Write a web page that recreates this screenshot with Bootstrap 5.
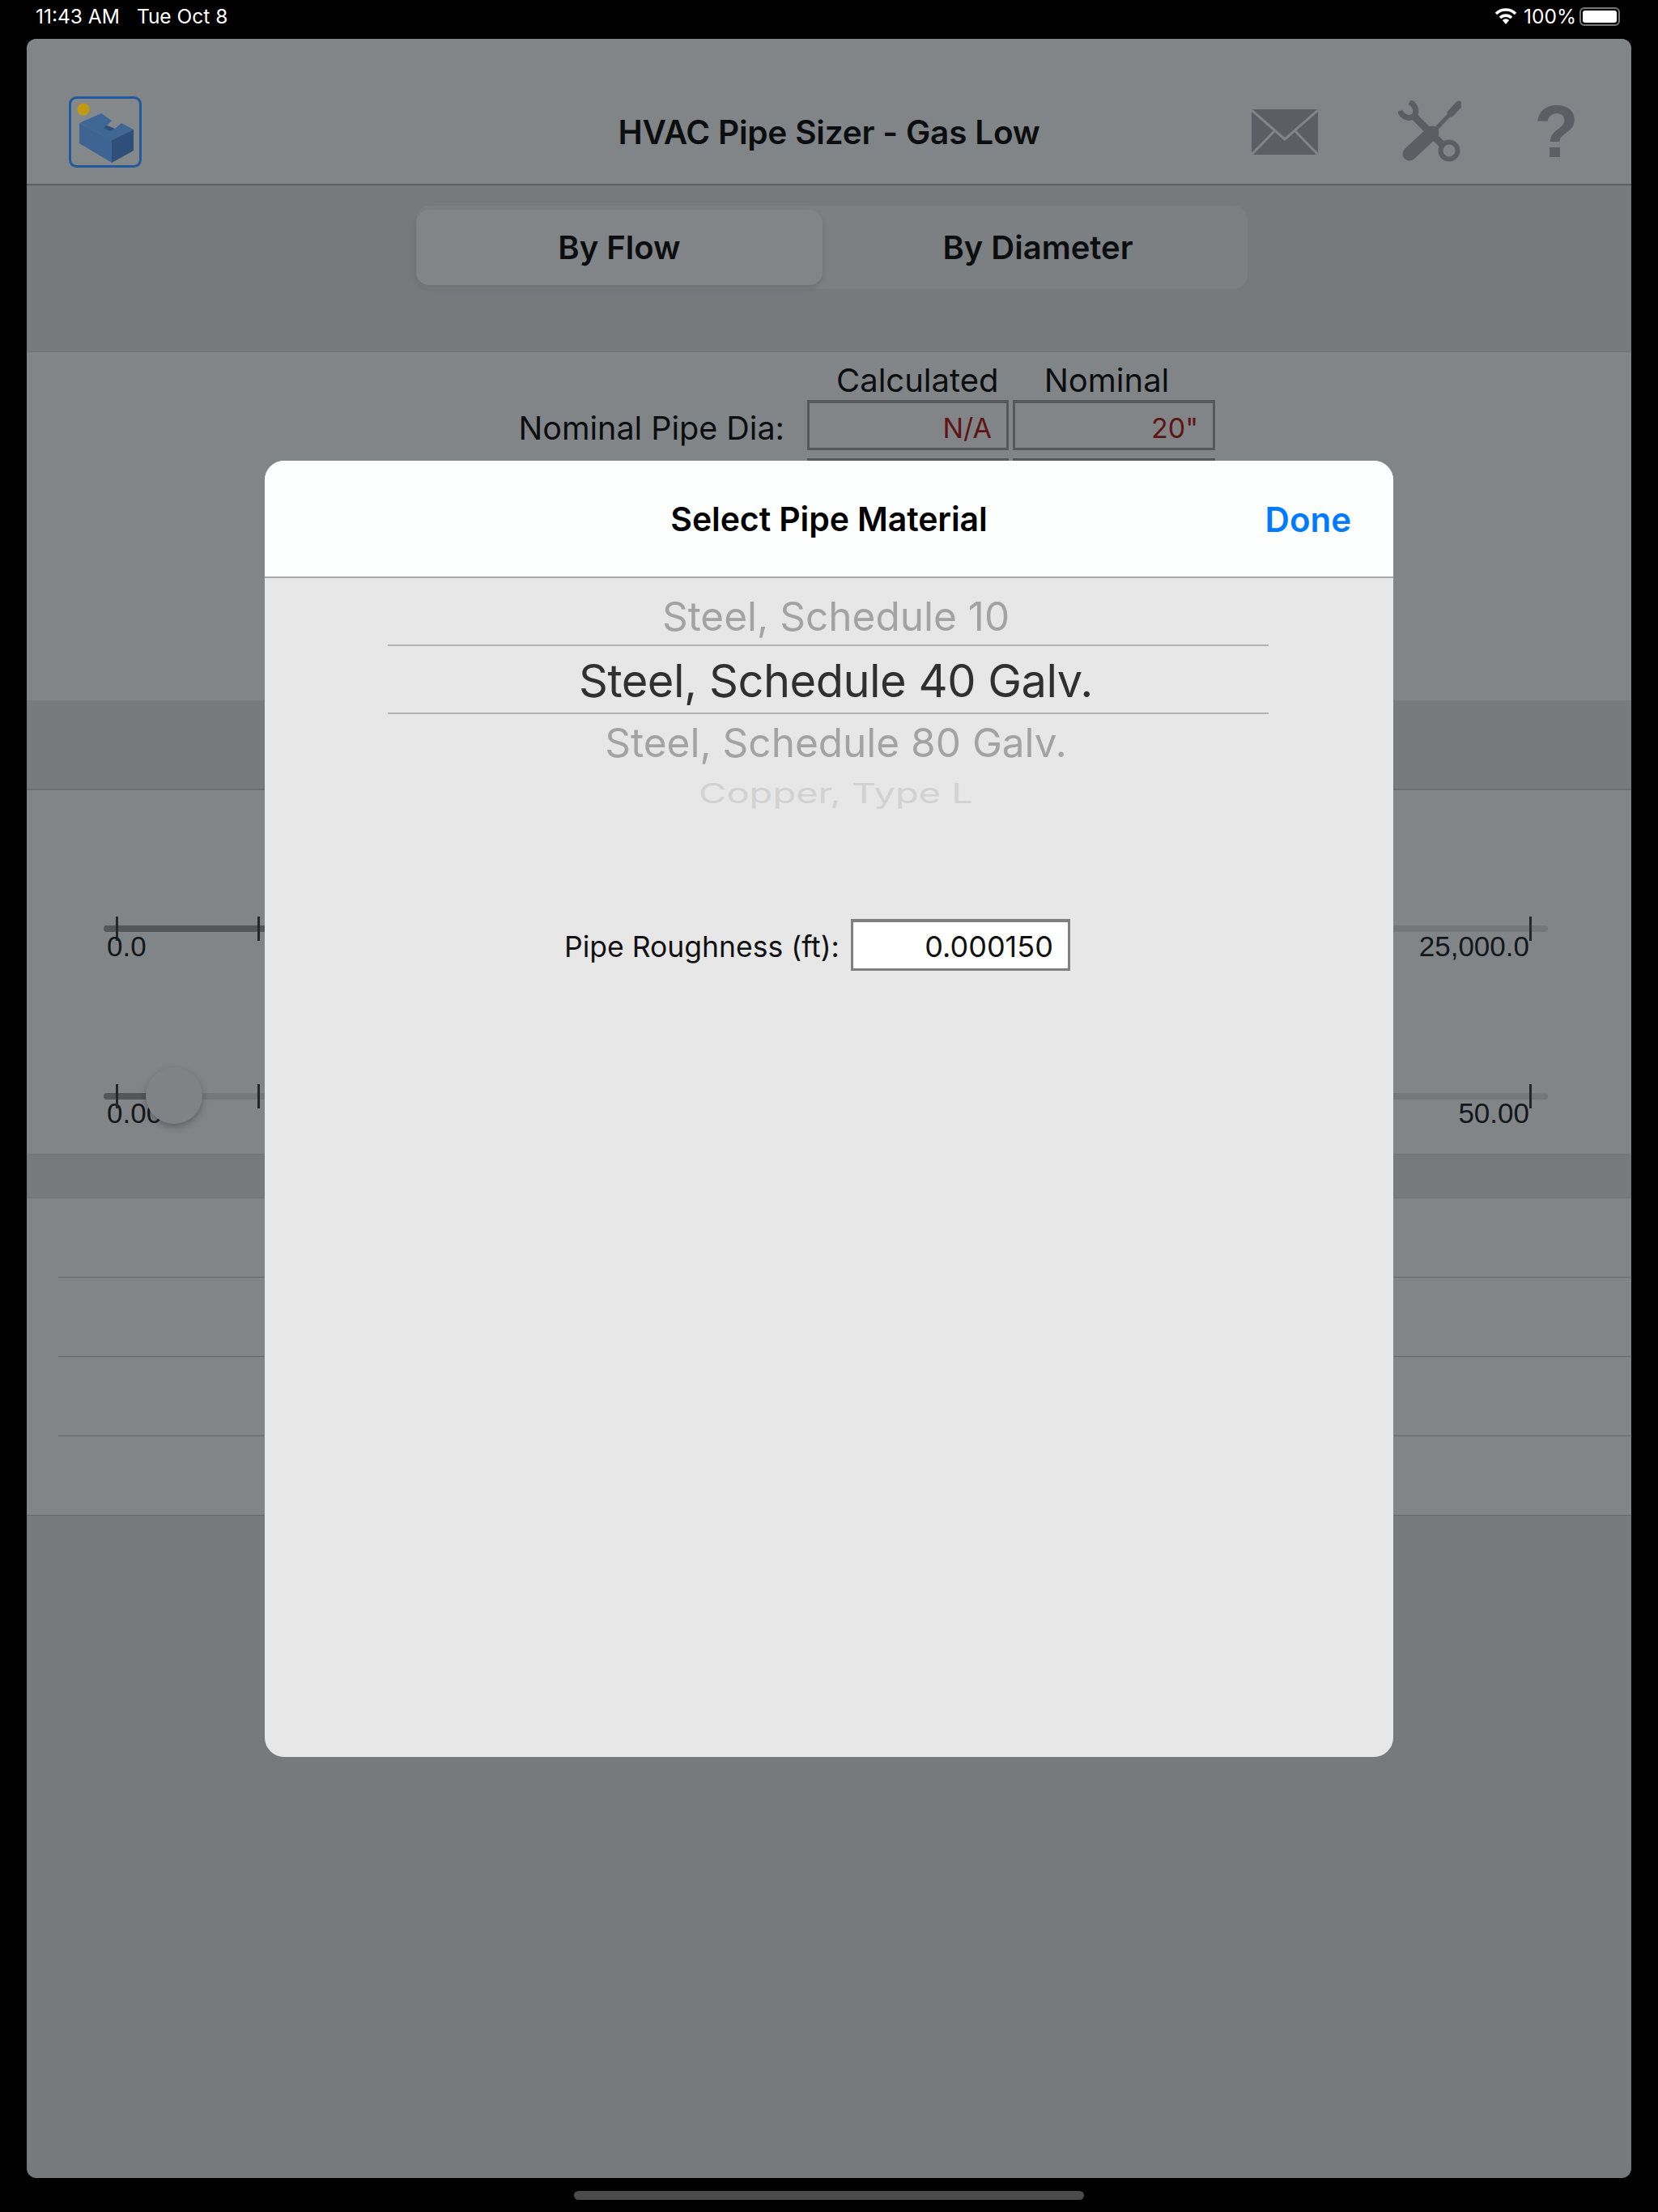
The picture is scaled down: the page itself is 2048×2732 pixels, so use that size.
<!DOCTYPE html>
<html lang="en">
<head>
  <meta charset="UTF-8" />
  <meta name="viewport" content="width=device-width, initial-scale=1.0" />
  <title>HVAC Pipe Sizer - Gas Low</title>
  <link href="https://cdn.jsdelivr.net/npm/bootstrap@5.3.0/dist/css/bootstrap.min.css" rel="stylesheet">
  <style>
    body { background: #000; width: 2048px; height: 2732px; overflow: hidden; font-family: Inter, "Liberation Sans", sans-serif; color: #0b0d0f; }

    /* status bar */
    .status-row { height: 48px; padding: 0 47px 8px 44px; color: #fff; font-size: 24.5px; }
    .status-date { margin-left: 21px; }
    .batt { width: 50px; height: 23px; border: 2px solid #777; border-radius: 6px; padding: 2px; }
    .batt-in { height: 100%; background: #fff; border-radius: 3px; }

    /* app behind the dim */
    .app-panel { margin: 0 33px; height: 2642px; background: #767a7c; border-radius: 12px; overflow: hidden; }
    .app-head { display: grid; grid-template-columns: 1fr auto 1fr; align-items: center; height: 181px; padding-top: 50px; background: #818588; border-bottom: 2px solid #5b5f62; }
    .app-title { font-size: 40.5px; font-weight: 600; letter-spacing: -.2px; padding-top: 4px; }
    .head-icons { padding-right: 65px; }
    .tools-ico { margin: 0 90px 0 99px; }
    .qmark { font-family: "Liberation Sans", sans-serif; font-weight: 700; font-size: 90px; line-height: 80px; color: #5b5f63; }

    .tab-band { height: 206px; padding-top: 25px; border-bottom: 1px solid #6b6f72; }
    .seg-wrap { width: 1027px; height: 103px; margin-left: 481px; background: #7c8082; border-radius: 18px; padding: 5px 0 5px 0; }
    .seg-btn { font-size: 40px; font-weight: 600; color: #0b0d0f; border: 0; border-radius: 16px; padding: 0; height: 93px; background: transparent; }
    .seg-on { width: 502px; background: #818588; box-shadow: 0 4px 8px rgba(0,0,0,.12); }
    .seg-off { width: 516px; }

    .light-block { background: #818588; }
    .dia-block { height: 430px; padding-top: 11px; }
    .col-cap { font-size: 40px; line-height: 48px; text-align: center; }
    .cap-gap { width: 1000px; }
    .cap-calc { width: 198px; }
    .cap-nom { width: 272px; }
    .dia-label { font-size: 39.5px; line-height: 50px; width: 936px; text-align: right; margin-top: 8px; }
    .dia-spacer { width: 936px; }
    .val-box { width: 249px; height: 62px; border: 3px solid #55595c; border-top-width: 4px; line-height: 62px; text-align: right; padding-right: 18px; font-size: 34px; color: #5e1414; }
    .val-box + .val-box { margin-left: 5px; width: 250px; }
    .val-first { margin-left: 28px; }
    .val-next { margin-top: 10px; }

    .dark-band { height: 111px; border-bottom: 2px solid #6a6e71; }
    .slide-block { height: 450px; border-bottom: 1px solid #6d7174; }
    .slide-track { height: 8px; margin: 0 103px 0 95px; background: #74787b; border-radius: 4px; position: relative; }
    .slide-one { top: 167px; }
    .slide-two { top: 329px; z-index: 2; }
    .track-fill { height: 100%; background: #53575a; border-radius: 4px; }
    .tick { position: absolute; top: -11px; width: 3px; height: 30px; background: #23272a; }
    .tick-a { left: 15px; }
    .tick-b { left: 190px; }
    .tick-c { right: 20px; }
    .slide-nums { font-family: "Liberation Sans", sans-serif; font-size: 35px; line-height: 34px; margin: 3px 126px 0 99px; color: #14171a; position: relative; }
    .nums-one { top: 165px; }
    .nums-two { top: 326px; }
    .thumb { position: absolute; left: 52px; top: -32px; width: 70px; height: 70px; border-radius: 50%; background: #7f8386; box-shadow: 0 4px 8px rgba(0,0,0,.25); }
    .mini-band { height: 54px; border-bottom: 1px solid #6d7174; }
    .blank-rows { padding-left: 39px; background: #818588; border-radius: 0; }
    .blank-rows .list-group-item { height: 98px; background: #818588; border: 0; border-bottom: 1px solid #63676a; border-radius: 0; padding: 0; }
    .blank-rows .list-group-item:last-child { margin-left: -39px; padding-left: 39px; }

    .home-bar { width: 630px; height: 11px; margin: 16px auto 0; background: #4b4b4b; border-radius: 6px; }

    /* sheet over everything */
    .sheet { position: absolute; z-index: 5; left: 327px; top: 569px; width: 1394px; height: 1601px; background: #e7e7e7; border: 0; border-radius: 24px; overflow: hidden; }
    .sheet-head { height: 145px; background: #fdfefe; border-bottom: 2px solid #a8a8a8; }
    .sheet-title { font-size: 41px; font-weight: 600; color: #000; line-height: 145px; flex: 1; text-align: center; letter-spacing: -.1px; }
    .sheet-done { font-size: 42px; font-weight: 600; color: #007aff; text-decoration: none; padding: 0; border: 0; line-height: 1; position: absolute; right: 52px; top: 52px; }
    .picker-box { width: 1088px; margin: 0 0 0 152px; text-align: center; }
    .pick-row { display: flex; align-items: center; justify-content: center; white-space: nowrap; padding-left: 19px; }
    .pick-a { height: 84px; font-size: 49.5px; color: #a3a3a3; border-bottom: 2px solid #b4b4b4; padding-top: 12px; }
    .pick-b { height: 84px; font-size: 56px; letter-spacing: -.5px; color: #303030; border-bottom: 2px solid #b4b4b4; padding-top: 4px; }
    .pick-c { height: 70px; font-size: 49.5px; color: #a3a3a3; }
    .pick-d { height: 54px; font-size: 47px; color: #d2d2d2; padding-top: 3px; }
    .pick-d span { display: block; transform: scaleY(.72); }
    .rough-row { margin-top: 129px; padding-left: 370px; }
    .rough-label { font-size: 35.5px; color: #111; margin: 6px 14px 0 0; }
    .rough-val { width: 271px; height: 64px; background: #fff; border: 3px solid #808080; border-top-width: 4px; text-align: right; padding-right: 18px; font-size: 36px; line-height: 60px; color: #111; }
  </style>
</head>
<body class="position-relative">

  <div class="status-row d-flex align-items-center">
    <span>11:43 AM</span>
    <span class="status-date">Tue Oct 8</span>
    <div class="ms-auto d-flex align-items-center">
      <svg width="28" height="22" viewBox="0 0 28 22">
        <path d="M2 8 a17 17 0 0 1 24 0" fill="none" stroke="#fff" stroke-width="3.6"/>
        <path d="M7 13 a10 10 0 0 1 14 0" fill="none" stroke="#fff" stroke-width="3.6"/>
        <path d="M14 21 l-4.2 -5 a6 6 0 0 1 8.4 0 z" fill="#fff"/>
      </svg>
      <span class="ms-2">100%</span>
      <div class="batt ms-1"><div class="batt-in"></div></div>
    </div>
  </div>

  <div class="app-panel">
    <header class="app-head">
      <div class="ps-5">
        <svg class="ms-1" width="90" height="88" viewBox="0 0 90 88">
          <rect x="1.5" y="1.5" width="87" height="85" rx="8" fill="#84888b" stroke="#21599f" stroke-width="3"/>
          <circle cx="18" cy="16" r="7.5" fill="#c29a12"/>
          <path d="M13 33 L40 21 L53 30 L47 36 L57 40 L65 33 L80 41 L53 54 Z" fill="#3f6796"/>
          <path d="M47 36 L57 40 L51 43 L43 39 Z" fill="#2c4f7c"/>
          <path d="M13 33 L53 54 L53 82 L13 58 Z" fill="#3d6492"/>
          <path d="M53 54 L80 41 L80 67 L53 82 Z" fill="#2d4f7a"/>
        </svg>
      </div>
      <div class="app-title">HVAC Pipe Sizer - Gas Low</div>
      <div class="head-icons d-flex justify-content-end align-items-center">
        <svg width="82" height="56" viewBox="0 0 82 56">
          <rect width="82" height="56" fill="#5b5f63"/>
          <path d="M0 1 L41 37 L82 1 M0 56 L29 26 M82 56 L53 26" fill="none" stroke="#818588" stroke-width="3"/>
        </svg>
        <svg class="tools-ico" width="78" height="78" viewBox="0 0 78 78" fill="none" stroke="#5b5f63">
          <path d="M14 66 L42 40" stroke-width="17" stroke-linecap="round"/>
          <path d="M42 40 L68 13" stroke-width="5"/>
          <path d="M65 16 L75 5" stroke-width="9" stroke-linecap="round"/>
          <path d="M20 20 L56 56" stroke-width="9"/>
          <circle cx="63" cy="62" r="10.5" stroke-width="6"/>
          <path d="M14 2 C21 5 24 13 20 19 C14 24 6 21 2 13" stroke-width="7"/>
        </svg>
        <span class="qmark">?</span>
      </div>
    </header>

    <section class="tab-band">
      <div class="seg-wrap d-flex">
        <button class="btn seg-btn seg-on">By Flow</button>
        <button class="btn seg-btn seg-off ms-2">By Diameter</button>
      </div>
    </section>

    <section class="light-block dia-block">
      <div class="d-flex">
        <div class="col-cap cap-gap"></div>
        <div class="col-cap cap-calc">Calculated</div>
        <div class="col-cap cap-nom">Nominal</div>
      </div>
      <div class="d-flex align-items-center">
        <div class="dia-label">Nominal Pipe Dia:</div>
        <div class="val-box val-first">N/A</div>
        <div class="val-box">20"</div>
      </div>
      <div class="d-flex val-next">
        <div class="dia-spacer"></div>
        <div class="val-box val-first"></div>
        <div class="val-box"></div>
      </div>
    </section>

    <div class="dark-band"></div>

    <section class="light-block slide-block">
      <div class="slide-track slide-one">
        <div class="track-fill" style="width:60%"></div>
        <i class="tick tick-a"></i><i class="tick tick-b"></i><i class="tick tick-c"></i>
      </div>
      <div class="slide-nums nums-one d-flex justify-content-between">
        <span>0.0</span><span>25,000.0</span>
      </div>
      <div class="slide-track slide-two">
        <div class="track-fill" style="width:5%"></div>
        <i class="tick tick-a"></i><i class="tick tick-b"></i><i class="tick tick-c"></i>
        <div class="thumb"></div>
      </div>
      <div class="slide-nums nums-two d-flex justify-content-between">
        <span>0.00</span><span>50.00</span>
      </div>
    </section>

    <div class="mini-band"></div>

    <ul class="list-group blank-rows">
      <li class="list-group-item"></li>
      <li class="list-group-item"></li>
      <li class="list-group-item"></li>
      <li class="list-group-item"></li>
    </ul>
  </div>

  <div class="home-bar"></div>

  <div class="card sheet">
    <div class="sheet-head d-flex">
      <div class="sheet-title">Select Pipe Material</div>
      <a class="btn sheet-done" href="#">Done</a>
    </div>
    <div class="picker-box">
      <div class="pick-row pick-a">Steel, Schedule 10</div>
      <div class="pick-row pick-b">Steel, Schedule 40 Galv.</div>
      <div class="pick-row pick-c">Steel, Schedule 80 Galv.</div>
      <div class="pick-row pick-d"><span>Copper, Type L</span></div>
    </div>
    <div class="rough-row d-flex align-items-center">
      <span class="rough-label">Pipe Roughness (ft):</span>
      <div class="rough-val">0.000150</div>
    </div>
  </div>

  <script src="https://cdn.jsdelivr.net/npm/bootstrap@5.3.0/dist/js/bootstrap.bundle.min.js"></script>
</body>
</html>
